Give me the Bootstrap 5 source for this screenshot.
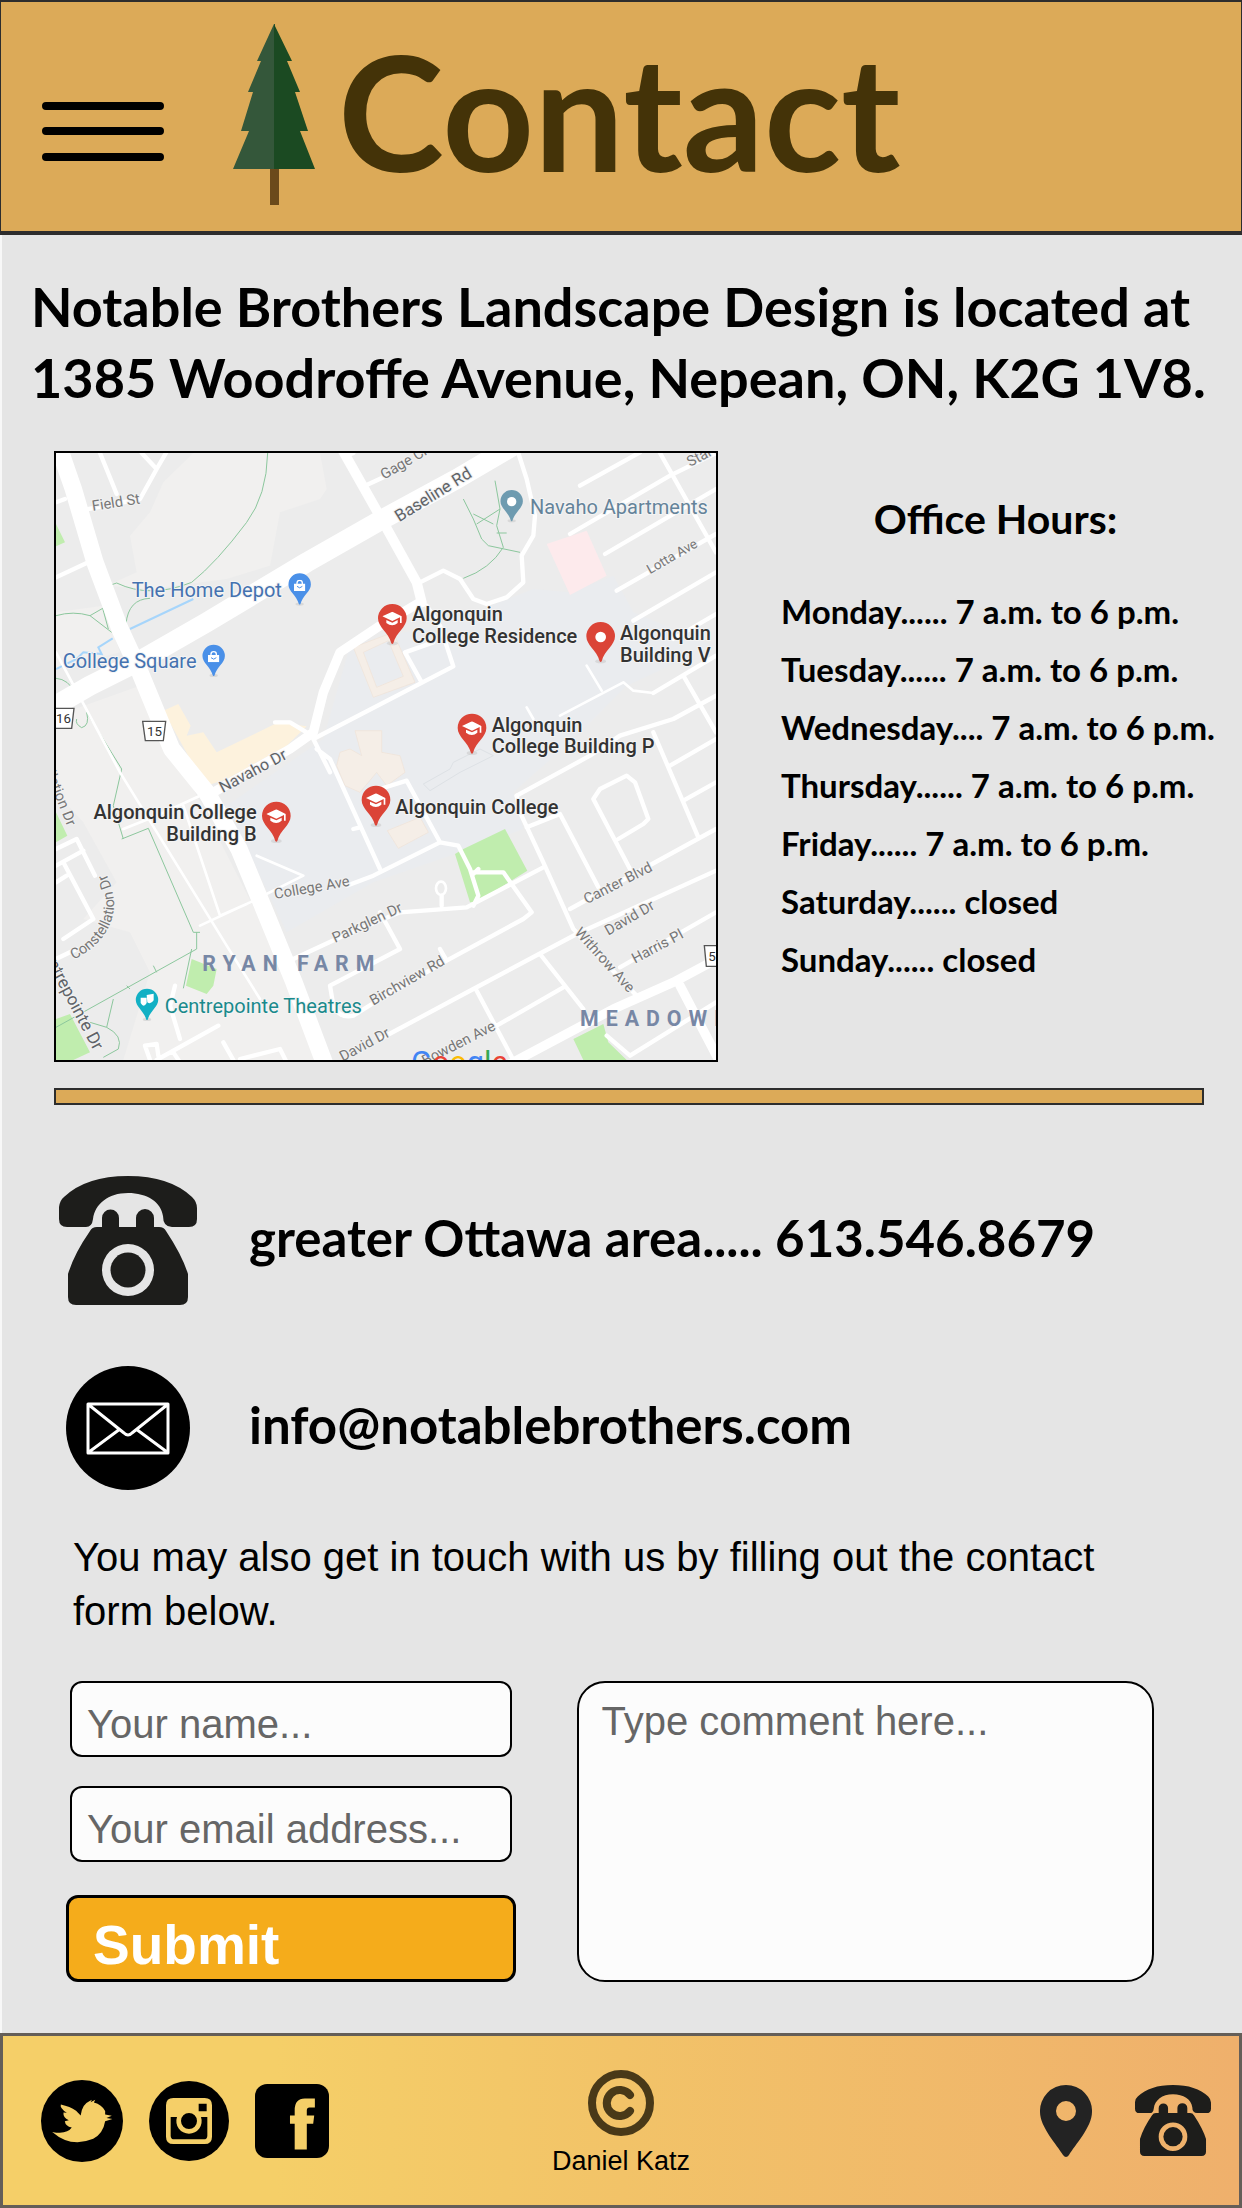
<!DOCTYPE html>
<html lang="en">
<head>
<meta charset="utf-8">
<meta name="viewport" content="width=device-width, initial-scale=1">
<title>Contact - Notable Brothers Landscape Design</title>
<link href="https://cdn.jsdelivr.net/npm/bootstrap@5.3.0/dist/css/bootstrap.min.css" rel="stylesheet">
<style>
  body { background: #e5e5e5; color: #000; font-family: "Liberation Sans", Arial, sans-serif; }
  .stamp { font-family: Lato, "Open Sans", sans-serif; font-weight: 700; }
  .site-header { background: #dcaa58; border: 2px solid #2d2d2d; border-width: 2px 1px 4px; padding: 22px 40px 26px; }
  .menu-btn { margin: 67px 68px 0 0; }
  .menu-btn svg, .tree, .contact-icon svg, .site-footer svg { display: block; }
  .page-title { font-size: 160px; line-height: 173px; color: #443308; margin: 0 0 0 23px; }
  .page-main { border-left: 2px solid #f8f8f8; }
  .address { font-size: 54px; line-height: 71px; padding: 36px 0 38px 29px; margin: 0; }
  .place-row { display: grid; grid-template-columns: 664fr 524fr; padding-left: 52px; }
  .map-box { border: 2px solid #000; }
  .map-box svg { display: block; width: 100%; height: auto; }
  .hours { padding: 42px 0 0 63px; }
  .hours h2 { font-size: 41px; line-height: 52px; padding: 0 32px 0 0; margin: 0 0 37px; }
  .hours li { font-size: 33px; line-height: 58px; white-space: nowrap; }
  .rule-bar { height: 17px; background: #dcaa58; border: 2px solid #2d2d2d; margin: 26px 38px 0 52px; }
  .contacts { padding: 71px 57px 0; gap: 61px; }
  .contact-icon { width: 138px; margin-right: 52px; }
  .contact-line { font-size: 51px; line-height: 60px; padding-bottom: 6px; color: #000; text-decoration: none; }
  .intro { font-size: 40px; line-height: 54px; padding: 40px 140px 0 71px; margin: 0 0 43px; }
  .contact-form { display: grid; grid-template-columns: 450fr 576fr; column-gap: 61px; padding: 0 88px 51px 64px; }
  .form-control, .form-control:focus { font-size: 40px; line-height: 46px; color: #000; background: #fcfcfc; border: 2px solid #000; border-radius: 12px; padding: 18px 15px 8px; }
  .form-control::placeholder { color: #666; opacity: 1; }
  .field { margin: 0 4px 29px; }
  textarea.form-control { border-radius: 28px; padding: 15px 22px; height: 100%; resize: none; }
  .submit-btn, .submit-btn:hover { width: 100%; text-align: left; font-size: 55px; line-height: 60px; font-weight: 700; color: #fff; background: #f5ac1b; border: 3px solid #000; border-radius: 12px; padding: 17px 24px 4px; margin-top: 4px; }
  .site-footer { background: linear-gradient(90deg, #f5cf68 22%, #f2c368 50%, #efb06c); border: 3px solid #645e58; height: 175px; display: grid; grid-template-columns: 1fr auto 1fr; align-items: center; padding: 0 28px; }
  .social-links { gap: 26px; padding-left: 10px; }
  .quick-links { gap: 43px; }
  .author-box { gap: 9px; padding-top: 6px; }
  .author { font-size: 27px; line-height: 32px; }
  .road { fill: none; stroke: #fff; stroke-linejoin: round; stroke-linecap: round; }
  .trail { fill: none; stroke: #8cc79d; stroke-width: 3; }
  .street { font-family: Roboto, sans-serif; font-size: 44px; fill: #777; stroke: #f2f2f2; stroke-width: 6; paint-order: stroke; }
  .poi { font-family: Roboto, sans-serif; font-size: 60px; stroke: #f4f4f4; stroke-width: 6; paint-order: stroke; }
  .campus { font-weight: 500; fill: #333; }
  .district { font-family: Roboto, sans-serif; font-size: 64px; font-weight: 700; fill: #7787a5; letter-spacing: 21px; }
</style>
</head>
<body>
<svg width="0" height="0" class="position-absolute" aria-hidden="true">
  <symbol id="phone" viewBox="0 0 138 129">
    <path fill="#1d1d1b" d="M8 51Q0 51 0 43V31Q1 24 5 21Q27 0 69 0Q111 0 133 21Q138 26 138 32V43Q138 51 130 51H113Q104 51 104 40C102 26 88 17 69 17C49 17 36 28 34 43Q33 51 27 51Z"/>
    <path fill="#1d1d1b" fill-rule="evenodd" d="M43 51V42A8.500 8.500 0 0 1 60 42V51H77V42A8.500 8.500 0 0 1 95 42V51H100Q105 51 107 55Q123 79 129 98V121Q129 129 121 129H17Q9 129 9 121V98Q15 78 31 55Q33 51 38 51ZM69 68A26 26 0 1 0 69 120A26 26 0 1 0 69 68Z"/>
    <circle cx="69" cy="94" r="17.500" fill="#1d1d1b"/>
  </symbol>
  <symbol id="pin" viewBox="0 0 88 124" overflow="visible">
    <ellipse cx="44" cy="118" rx="16" ry="6" fill="#ccc" opacity=".6"/>
    <path d="M44 0A43 43 0 0 0 1 43C1 70 32 84 41 118Q44 122 47 118C56 84 87 70 87 43A43 43 0 0 0 44 0Z"/>
  </symbol>
  <symbol id="cap" viewBox="0 0 60 44">
    <path fill="#fff" d="M30 0L0 14L30 28L53 17V34H58V14ZM12 25V34Q30 48 46 34V25L30 33Z"/>
  </symbol>
  <symbol id="bag" viewBox="0 0 34 34">
    <path fill="#fff" d="M0 12H34V34H0Z"/><path fill="none" stroke="#fff" stroke-width="4" d="M9 14V10A8 8 0 0 1 25 10V14"/><path fill="none" stroke="#4a90e8" stroke-width="3" d="M9 20Q17 29 25 20"/>
  </symbol>
</svg>

<header class="site-header d-flex align-items-start">
  <button type="button" class="menu-btn btn p-0 border-0" aria-label="Menu">
    <svg width="124" height="72" viewBox="0 0 124 72" stroke="#000" stroke-width="8" stroke-linecap="round"><path d="M5 15H119M5 40H119M5 66H119"/></svg>
  </button>
  <svg class="tree" width="82" height="181" viewBox="0 0 82 181" aria-hidden="true">
    <path fill="#6b4a1b" d="M37 145H46V181H37Z"/>
    <path fill="#34573a" d="M41 0L24 37H28L15 68H20L8 107H16L0 145H42V0Z"/>
    <path fill="#1b4a22" d="M41 0L59 37H54L67 68H62L75 107H67L82 145H41Z"/>
  </svg>
  <h1 class="page-title stamp">Contact</h1>
</header>

<main class="page-main">
  <p class="address stamp">Notable Brothers Landscape Design is located at<br>1385 Woodroffe Avenue, Nepean, ON, K2G 1V8.</p>

  <section class="place-row">
    <div class="map-box">
      <svg viewBox="48 42 1980 1821" role="img" aria-label="Map of the Algonquin College area">
        <path fill="#ececec" d="M0 0H2100V1900H0Z"/>
        <path fill="#f1f0ef" d="M460 42H840L860 150L840 180L720 220L690 380L560 420L330 450L200 440L290 400L270 290L330 220L370 130Z"/>
        <path fill="#f1f0ef" d="M48 520L190 500L240 640L48 690ZM48 830L300 740L460 1050L700 1520L860 1863H250L330 1600L270 1480L130 1440L230 1330L130 1150L48 1060Z"/>
        <path fill="#eaecef" d="M850 900L930 620L1040 590L1200 560L1480 450L1590 460L1720 410L1780 520L2020 620L1760 740L1600 900L1420 1060L1450 1170L1260 1240L1000 1330L740 1480L560 1100Z"/>
        <path fill="#fdf2dd" d="M370 815L415 795L452 860L440 890L490 880L530 940L715 850L800 862L740 920L560 1020L500 1040L450 960Z"/>
        <g fill="#f5eee7" stroke="#f0e2d6" stroke-width="2">
          <path fill-rule="evenodd" d="M940 625L1060 580L1125 730L1000 775ZM970 640L1010 745L1090 712L1045 605Z"/>
          <path d="M945 875H1025V940L1080 950L1095 1000L1040 1040L1010 1000L960 1060L915 1040L890 980L900 940L930 930L965 950Z"/>
          <path d="M1042 1175L1140 1135L1165 1180L1075 1228Z"/>
        </g>
        <path fill="none" stroke="#dde1e5" stroke-width="3" d="M1150 1035L1230 990L1240 970L1320 930L1360 950L1260 1000L1170 1055Z"/>
        <path fill="#fdeaec" d="M1520 315L1640 275L1700 410L1590 468Z"/>
        <g fill="#c0edae">
          <path d="M48 255L75 310L48 322ZM48 1120L82 1190L48 1210ZM48 1740L90 1725L150 1840L100 1863H48Z"/>
          <path d="M455 1560L530 1590L520 1640L500 1665L438 1640ZM1270 1230L1395 1170L1462 1295L1310 1390L1290 1390L1245 1245Z"/>
          <path d="M1600 1800L1690 1755L1705 1810L1760 1863H1630Z"/>
        </g>
        <g class="trail">
          <path d="M683 42Q680 170 620 250Q530 370 455 430Q330 480 230 432L212 438M330 478Q265 480 258 555M48 530Q100 515 150 530L215 580M150 530L188 508L205 570M48 718Q85 720 108 765M140 820Q150 860 125 866Q105 855 110 840M140 820L245 990L220 1100L250 1200M245 1200L325 1168L460 1480H480M470 1480V1530L48 1765M455 1530L430 1648M220 1680L200 1765L150 1750M200 1765Q250 1790 235 1830L190 1855M260 1640L270 1650M340 1580L350 1600"/>
          <path d="M1270 180L1300 240L1325 300L1345 320L1440 340M1365 125L1380 210L1370 260L1390 325Q1350 390 1270 418M1300 225L1360 255M1310 255L1380 210M1370 282H1400"/>
        </g>
        <path fill="none" stroke="#a6d5fb" stroke-width="6" d="M460 480L270 570M218 598L175 625L185 645L130 640L110 660L48 690"/>
        <g class="road" stroke-width="13">
          <path d="M180 42L230 165M120 215L300 180L350 90L305 42M350 90L378 42M48 190L75 180M48 415L145 370M920 50L940 42M980 138L1040 110"/>
          <path d="M1140 430L1210 395L1260 420L1300 480L1340 495L1400 475L1450 430L1445 350L1480 290L1485 230L1460 120L1435 42M820 900L1240 682L1200 560L1160 500M1145 730L1095 640L1180 610M830 930L870 960L1020 1290M820 900L870 1000M705 850L750 850L800 880M940 1170L960 1165"/>
          <path d="M1620 140L1800 40M1590 285L1890 110L2028 42M1695 345L2028 150M1730 455L2028 285M1780 545L2028 400M1900 600L2028 525M1860 42L2028 340"/>
          <path stroke-width="8" d="M1640 680L1685 755M1560 830L1750 730L1780 755L1840 762M1460 805L1480 840M48 640L240 1000L560 1520L660 1680M250 1170L350 1130L480 1070M430 1100L540 1430L620 1395M480 1460L630 1390L790 1310L650 1250"/>
          <path d="M1840 762L2028 650M1930 710L2028 880M1430 1070L1650 950L1740 890L1900 840L2028 770M1840 880L1975 1195M1890 980L2028 900M1930 1085L2028 1030"/>
          <path d="M920 1340L1000 1310L1200 1210L1255 1220L1290 1290L1315 1370L1300 1400M1020 1050L1100 1025L1200 1210M760 1560L910 1490L1080 1420L1280 1405L1510 1285M1300 1300H1390L1475 1420L1450 1440L1220 1565L1020 1680L940 1730Q900 1740 880 1700L870 1640L1080 1530L1020 1420M1220 1565L1200 1530M1205 1400V1370M1300 1305L1315 1290"/>
          <ellipse cx="1203" cy="1348" rx="15" ry="20" stroke-width="8"/>
          <path d="M1430 1070L1440 1120L1510 1270L1600 1470L1790 1670M1460 1165L1560 1125L1675 1345M1770 1290L1660 1080L1680 1050L1760 1010L1785 1030L1825 1140L1810 1155L1735 1200M1590 1410L2028 1170M1020 1800L1300 1650L1610 1485L2028 1295M1740 1585L2028 1420M1310 1655L1420 1863M1370 1760L1570 1645M1500 1545L1630 1710M1700 1790L1770 1850L2028 1690"/>
          <path d="M48 1230L110 1200L165 1310M48 1280L130 1235M70 1270L160 1440L70 1500M48 1560L110 1530M48 1330L80 1310M405 1640L390 1700L420 1800M350 1863L535 1760M400 1840L420 1870M330 1863L315 1820L350 1815L355 1850M550 1810L580 1863M600 1860L720 1830L740 1870"/>
        </g>
        <g class="road">
          <path stroke-width="52" d="M55 20L100 150L165 370L240 570L300 700L395 930L500 1060L597 1230L680 1430L762 1630L860 1890"/>
          <path stroke-width="60" d="M20 815L150 740L300 665L500 550L800 370L1020 245L1250 120L1420 20"/>
          <path stroke-width="30" d="M900 20L1030 250L1130 430L1145 490"/>
          <path stroke-width="28" d="M520 1060L750 930L820 880L850 760L900 640L1020 560L1140 490"/>
          <path stroke-width="28" d="M1400 1880L1720 1710L1900 1630L2050 1550M1920 1640L2040 1870"/>
        </g>

        <g class="street">
          <text transform="translate(158 216) rotate(-9)">Field St</text>
          <text transform="translate(1032 122) rotate(-30)">Gage Cres</text>
          <text style="font-size:50px;fill:#5f6368" transform="translate(1078 250) rotate(-32)">Baseline Rd</text>
          <text transform="translate(1950 84) rotate(-28)">Starwood</text>
          <text style="font-size:40px" transform="translate(1830 406) rotate(-30)">Lotta Ave</text>
          <text style="font-size:48px;fill:#5f6368" transform="translate(548 1062) rotate(-28)">Navaho Dr</text>
          <text transform="translate(705 1380) rotate(-10)">College Ave</text>
          <text transform="translate(885 1512) rotate(-25)">Parkglen Dr</text>
          <text transform="translate(1000 1700) rotate(-30)">Birchview Rd</text>
          <text transform="translate(908 1868) rotate(-28)">David Dr</text>
          <text transform="translate(1155 1880) rotate(-27)">Bowden Ave</text>
          <text transform="translate(1640 1396) rotate(-27)">Canter Blvd</text>
          <text transform="translate(1705 1490) rotate(-30)">David Dr</text>
          <text transform="translate(1785 1574) rotate(-28)">Harris Pl</text>
          <text transform="translate(1602 1482) rotate(48)">Withrow Ave</text>
          <text transform="translate(8 980) rotate(68)">ellation Dr</text>
          <path id="bend" fill="none" stroke="none" d="M100 1562C190 1520 225 1450 222 1390Q218 1330 180 1270"/>
          <text><textPath href="#bend">Constellation Dr</textPath></text>
          <text style="font-size:52px;fill:#5f6368" transform="translate(-8 1518) rotate(62)">Centrepointe Dr</text>
        </g>

        <g fill="#fff" stroke="#555" stroke-width="4">
          <path d="M30 808H102L95 868H30ZM308 847H377L370 905H316ZM1993 1520H2060V1582H1999Z"/>
        </g>
        <g font-family="Roboto, sans-serif" font-size="40" fill="#333"><text x="48" y="853">16</text><text x="321" y="891">15</text><text x="2005" y="1566">5</text></g>

        <g class="poi">
          <text x="275" y="475" fill="#4472b0">The Home Depot</text>
          <text x="68" y="688" fill="#4472b0">College Square</text>
          <text x="1470" y="224" fill="#64839a">Navaho Apartments</text>
          <text x="374" y="1722" fill="#1a8a8c">Centrepointe Theatres</text>
          <text class="campus" x="1116" y="546">Algonquin</text><text class="campus" x="1116" y="612">College Residence</text>
          <text class="campus" x="1740" y="603">Algonquin</text><text class="campus" x="1740" y="669">Building V</text>
          <text class="campus" x="1355" y="878">Algonquin</text><text class="campus" x="1355" y="942">College Building P</text>
          <text class="campus" x="650" y="1140" text-anchor="end">Algonquin College</text><text class="campus" x="650" y="1206" text-anchor="end">Building B</text>
          <text class="campus" x="1066" y="1124">Algonquin College</text>
        </g>
        <text class="district" x="487" y="1595">RYAN FARM</text>
        <text class="district" x="1620" y="1762">MEADOWLANDS</text>
        <g font-family="Roboto, sans-serif" font-size="92"><text x="1113" y="1902"><tspan fill="#4285f4">G</tspan><tspan fill="#ea4335">o</tspan><tspan fill="#fbbc05">o</tspan><tspan fill="#4285f4">g</tspan><tspan fill="#34a853">l</tspan><tspan fill="#ea4335">e</tspan></text></g>

        <g fill="#db4437">
          <use href="#pin" x="1013" y="495" width="88" height="124"/><use href="#pin" x="1638" y="549" width="88" height="124"/>
          <use href="#pin" x="1252" y="824" width="88" height="124"/><use href="#pin" x="665" y="1088" width="88" height="124"/><use href="#pin" x="964" y="1040" width="88" height="124"/>
        </g>
        <use href="#pin" x="744" y="403" width="70" height="97" fill="#4a90e8"/><use href="#pin" x="486" y="617" width="70" height="97" fill="#4a90e8"/>
        <use href="#pin" x="1380" y="153" width="70" height="97" fill="#6e9bb0"/><use href="#pin" x="286" y="1649" width="70" height="97" fill="#12b0c4"/>
        <circle cx="1682" cy="594" r="16" fill="#fff"/><circle cx="1415" cy="188" r="14" fill="#fff"/>
        <use href="#cap" x="1027" y="518" width="60" height="44"/><use href="#cap" x="1266" y="847" width="60" height="44"/><use href="#cap" x="679" y="1111" width="60" height="44"/><use href="#cap" x="978" y="1063" width="60" height="44"/>
        <use href="#bag" x="762" y="422" width="34" height="34"/><use href="#bag" x="504" y="636" width="34" height="34"/>
        <path fill="#fff" d="M302 1676H320V1692Q311 1708 302 1692ZM320 1668L341 1664V1684Q332 1698 322 1690Z"/>
      </svg>
    </div>
    <div class="hours stamp">
      <h2 class="stamp text-center">Office Hours:</h2>
      <ul class="list-unstyled mb-0">
        <li>Monday...... 7 a.m. to 6 p.m.</li>
        <li>Tuesday...... 7 a.m. to 6 p.m.</li>
        <li>Wednesday.... 7 a.m. to 6 p.m.</li>
        <li>Thursday...... 7 a.m. to 6 p.m.</li>
        <li>Friday...... 7 a.m. to 6 p.m.</li>
        <li>Saturday...... closed</li>
        <li>Sunday...... closed</li>
      </ul>
    </div>
  </section>

  <div class="rule-bar"></div>

  <section class="contacts d-flex flex-column">
    <div class="d-flex align-items-center">
      <span class="contact-icon"><svg width="138" height="129"><use href="#phone"/></svg></span>
      <a class="contact-line stamp" href="tel:6135468679">greater Ottawa area..... 613.546.8679</a>
    </div>
    <div class="d-flex align-items-center">
      <span class="contact-icon d-flex justify-content-center"><svg width="124" height="124" viewBox="0 0 124 124"><circle cx="62" cy="62" r="62"/><path fill="none" stroke="#fff" stroke-width="3" stroke-linejoin="round" d="M22 38H102V87H22ZM23 39L58 67Q62 71 66 67L101 39M23 86L54 63M101 86L70 63"/></svg></span>
      <a class="contact-line stamp" href="mailto:info@notablebrothers.com">info@notablebrothers.com</a>
    </div>
  </section>

  <p class="intro">You may also get in touch with us by filling out the contact form below.</p>

  <form class="contact-form">
    <div>
      <div class="field"><label class="visually-hidden" for="name">Your name</label><input class="form-control" id="name" type="text" placeholder="Your name..."></div>
      <div class="field"><label class="visually-hidden" for="email">Your email address</label><input class="form-control" id="email" type="email" placeholder="Your email address..."></div>
      <button type="submit" class="btn submit-btn">Submit</button>
    </div>
    <div><label class="visually-hidden" for="comment">Comment</label><textarea class="form-control" id="comment" placeholder="Type comment here..."></textarea></div>
  </form>
</main>

<footer class="site-footer">
  <div class="social-links d-flex align-items-center">
    <a href="#" aria-label="Twitter"><svg width="82" height="82" viewBox="0 0 248 248"><circle cx="124" cy="124" r="124"/><path fill="#f5cf68" d="M34 157Q78 166 93 144Q74 140 72 125L84 122Q66 113 68 98L78 99Q56 85 60 74Q88 80 106 93L120 107Q124 73 146 64L154 60L150 67L164 60L160 68Q184 74 194 94L194 104L214 108L198 115L216 118L194 125Q188 162 158 178Q90 206 34 157Z"/></svg></a>
    <a href="#" aria-label="Instagram"><svg width="80" height="80" viewBox="0 0 240 240"><circle cx="120" cy="120" r="120"/><path fill="#f5cf68" fill-rule="evenodd" d="M73 51H167Q189 51 189 73V167Q189 189 167 189H73Q51 189 51 167V73Q51 51 73 51ZM65 108V164Q65 175 76 175H164Q175 175 175 164V108H156A38 38 0 1 1 84 108ZM120 96A24 24 0 1 0 120 144A24 24 0 1 0 120 96ZM149 68V91H173V68Z"/></svg></a>
    <a href="#" aria-label="Facebook"><svg width="74" height="74" viewBox="0 0 220 220"><rect width="220" height="220" rx="36"/><path fill="#f5cf68" d="M118 195V118H104V94H118V78Q118 43 148 43H178V70H162Q154 70 154 79V94H176L173 118H154V195Z"/></svg></a>
  </div>
  <div class="author-box d-flex flex-column align-items-center">
    <svg width="66" height="66" viewBox="0 0 66 66" fill="none" stroke="#493918" aria-label="Copyright"><circle cx="33" cy="33" r="29" stroke-width="8"/><path stroke-width="8" stroke-linecap="round" d="M42 25A13 13 0 1 0 42 41"/></svg>
    <span class="author">Daniel Katz</span>
  </div>
  <div class="quick-links d-flex justify-content-end align-items-center">
    <a href="#" aria-label="Location"><svg width="52" height="72" viewBox="0 0 52 72"><path fill="#232323" fill-rule="evenodd" d="M26 0A26 26 0 0 0 0 27C0 42 17 60 23 70Q26 74 29 70C35 60 52 42 52 27A26 26 0 0 0 26 0ZM26 16A10 10 0 1 1 26 36A10 10 0 1 1 26 16Z"/></svg></a>
    <a href="#" aria-label="Phone"><svg width="76" height="71"><use href="#phone"/></svg></a>
  </div>
</footer>
<script src="https://cdn.jsdelivr.net/npm/bootstrap@5.3.0/dist/js/bootstrap.bundle.min.js"></script>
</body>
</html>
